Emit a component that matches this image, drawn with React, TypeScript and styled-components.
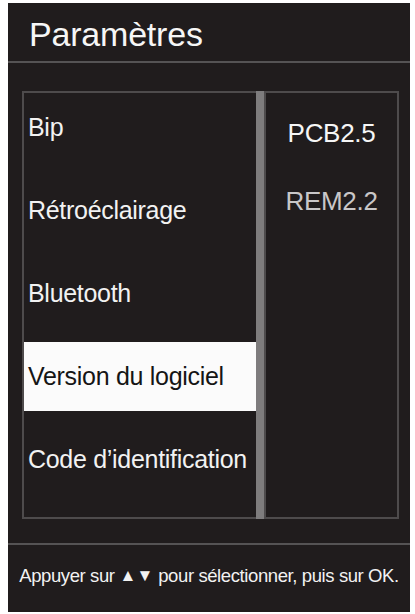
import { createGlobalStyle } from 'styled-components'
import styled, { css } from 'styled-components'

const GlobalStyle = createGlobalStyle`
  html, body {
    margin: 0;
    padding: 0;
    background: #ffffff;
  }
  body {
    font-family: "Liberation Sans", Arial, sans-serif;
  }
`

const menuItems = ['Bip', 'Rétroéclairage', 'Bluetooth', 'Version du logiciel', 'Code d’identification']
const selectedIndex = 3

const versions = [
  { label: 'PCB2.5', dim: false },
  { label: 'REM2.2', dim: true }
]

export default function App () {
  return (
    <>
      <GlobalStyle />
      <Screen>
        <Header>
          <Title>Paramètres</Title>
        </Header>
        <Body>
          <Panels>
            <ListBox>
              {menuItems.map((item, i) => (
                <ListItem key={item} selected={i === selectedIndex}>{item}</ListItem>
              ))}
            </ListBox>
            <ScrollBar />
            <DetailBox>
              {versions.map((v) => (
                <DetailItem key={v.label} dim={v.dim}>{v.label}</DetailItem>
              ))}
            </DetailBox>
          </Panels>
        </Body>
        <Footer>
          Appuyer sur <Arrows>▲▼</Arrows> pour sélectionner, puis sur OK.
        </Footer>
      </Screen>
    </>
  )
}

const Screen = styled.div`
  margin: 3px 0 0 8px;
  width: 402px;
  height: 609px;
  background: #201c1d;
  display: flex;
  flex-direction: column;
  color: #f4f4f4;
`

const Header = styled.div`
  height: 58px;
  display: flex;
  align-items: center;
  padding-left: 21px;
  border-bottom: 2px solid #555354;
  flex-shrink: 0;
`

const Title = styled.div`
  font-size: 34px;
  letter-spacing: -0.2px;
  color: #f6f6f6;
  padding-top: 4px;
`

const Body = styled.div`
  padding: 28px 11px 0 14px;
  height: 454px;
  box-sizing: border-box;
  flex-shrink: 0;
`

const Panels = styled.div`
  display: flex;
  height: 428px;
`

const ListBox = styled.div`
  width: 232px;
  border: 2px solid #4e4b4c;
  border-right: none;
  display: flex;
  flex-direction: column;
  gap: 14px;
`

const ListItem = styled.div<{ selected?: boolean }>`
  height: 69px;
  display: flex;
  align-items: center;
  padding-left: 4px;
  font-size: 25px;
  letter-spacing: -0.3px;
  white-space: nowrap;
  color: #f2f2f2;

  ${({ selected }) => selected && css`
    background: #fbfbfb;
    color: #151515;
  `}
`

const ScrollBar = styled.div`
  width: 8px;
  background: #7e7c7d;
`

const DetailBox = styled.div`
  flex: 1;
  border: 2px solid #4e4b4c;
  padding-top: 6px;
  display: flex;
  flex-direction: column;
`

const DetailItem = styled.div<{ dim?: boolean }>`
  height: 68px;
  display: flex;
  align-items: center;
  justify-content: center;
  font-size: 26px;
  letter-spacing: -0.3px;
  color: ${({ dim }) => dim ? '#c9c7c8' : '#f6f6f6'};
`

const Footer = styled.div`
  margin-top: 26px;
  border-top: 2px solid #555354;
  flex: 1;
  display: flex;
  align-items: center;
  justify-content: center;
  padding-bottom: 6px;
  font-size: 18.5px;
  letter-spacing: -0.4px;
  color: #f2f2f2;
  white-space: nowrap;
`

const Arrows = styled.span`
  margin: 0 5px;
  font-size: 17px;
  letter-spacing: 0;
`
